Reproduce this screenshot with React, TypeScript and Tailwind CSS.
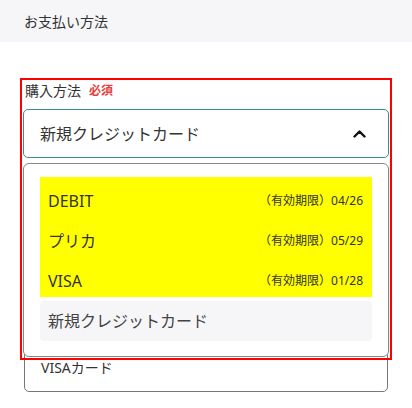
import { useState } from 'react';

type Card = { name: string; expiry: string };

const cards: Card[] = [
  { name: 'DEBIT', expiry: '04/26' },
  { name: 'プリカ', expiry: '05/29' },
  { name: 'VISA', expiry: '01/28' },
];

export default function App() {
  const [open] = useState(true);

  return (
    <div className="w-[412px] min-h-[408px] bg-white text-[#333] font-['Noto_Sans','Noto_Sans_CJK_JP',sans-serif]">
      <header className="h-[42px] bg-[#f6f6f8] px-6 flex items-center text-[14px] text-[#333]">
        お支払い方法
      </header>

      <div className="pt-[36px]">
        {/* highlighted field */}
        <div className="relative z-10 mx-5 border-2 border-[#ff0000] px-px pb-px">
          <div className="flex items-center gap-2 pl-[2px] pt-px mb-2 h-[20px] box-content">
            <span className="text-[14px] leading-[20px]">購入方法</span>
            <span className="text-[12px] leading-[20px] font-bold text-[#e53e3e]">必須</span>
          </div>

          <button className="w-full h-[49px] flex items-center justify-between pl-4 pr-[22px] border border-[#3a8f8f] rounded-[5px] bg-white text-[16px] text-[#333]">
            <span>新規クレジットカード</span>
            <svg width="13" height="8" viewBox="0 0 13 8" fill="none">
              <path d="M1.5 6.5L6.5 1.5L11.5 6.5" stroke="#111" strokeWidth="2.4" strokeLinecap="round" strokeLinejoin="round" />
            </svg>
          </button>

          {open && (
            <div className="mt-[5px] border border-[#888] rounded-[6px] bg-white px-4 pt-[13px] pb-[15px]">
              <ul className="bg-[#ffff00]">
                {cards.map((c) => (
                  <li key={c.name} className="h-[40px] flex items-center justify-between pl-2 pr-[9px] pt-[8px]">
                    <span className="text-[16px] text-[#333]">{c.name}</span>
                    <span className="text-[12px] text-[#333]">（有効期限）{c.expiry}</span>
                  </li>
                ))}
              </ul>
              <div className="mt-1 h-[40px] flex items-center pl-2 bg-[#f6f6f8] rounded-[4px] text-[16px] text-[#444]">
                新規クレジットカード
              </div>
            </div>
          )}
        </div>

        {/* next field, partly covered by the open list */}
        <div className="relative -mt-[10px] ml-6 mr-6 w-[364px] h-[42px] border border-[#777] rounded-[5px] pl-4 pt-[7px] text-[14px] leading-[20px] text-[#333]">
          VISAカード
        </div>
      </div>
    </div>
  );
}
